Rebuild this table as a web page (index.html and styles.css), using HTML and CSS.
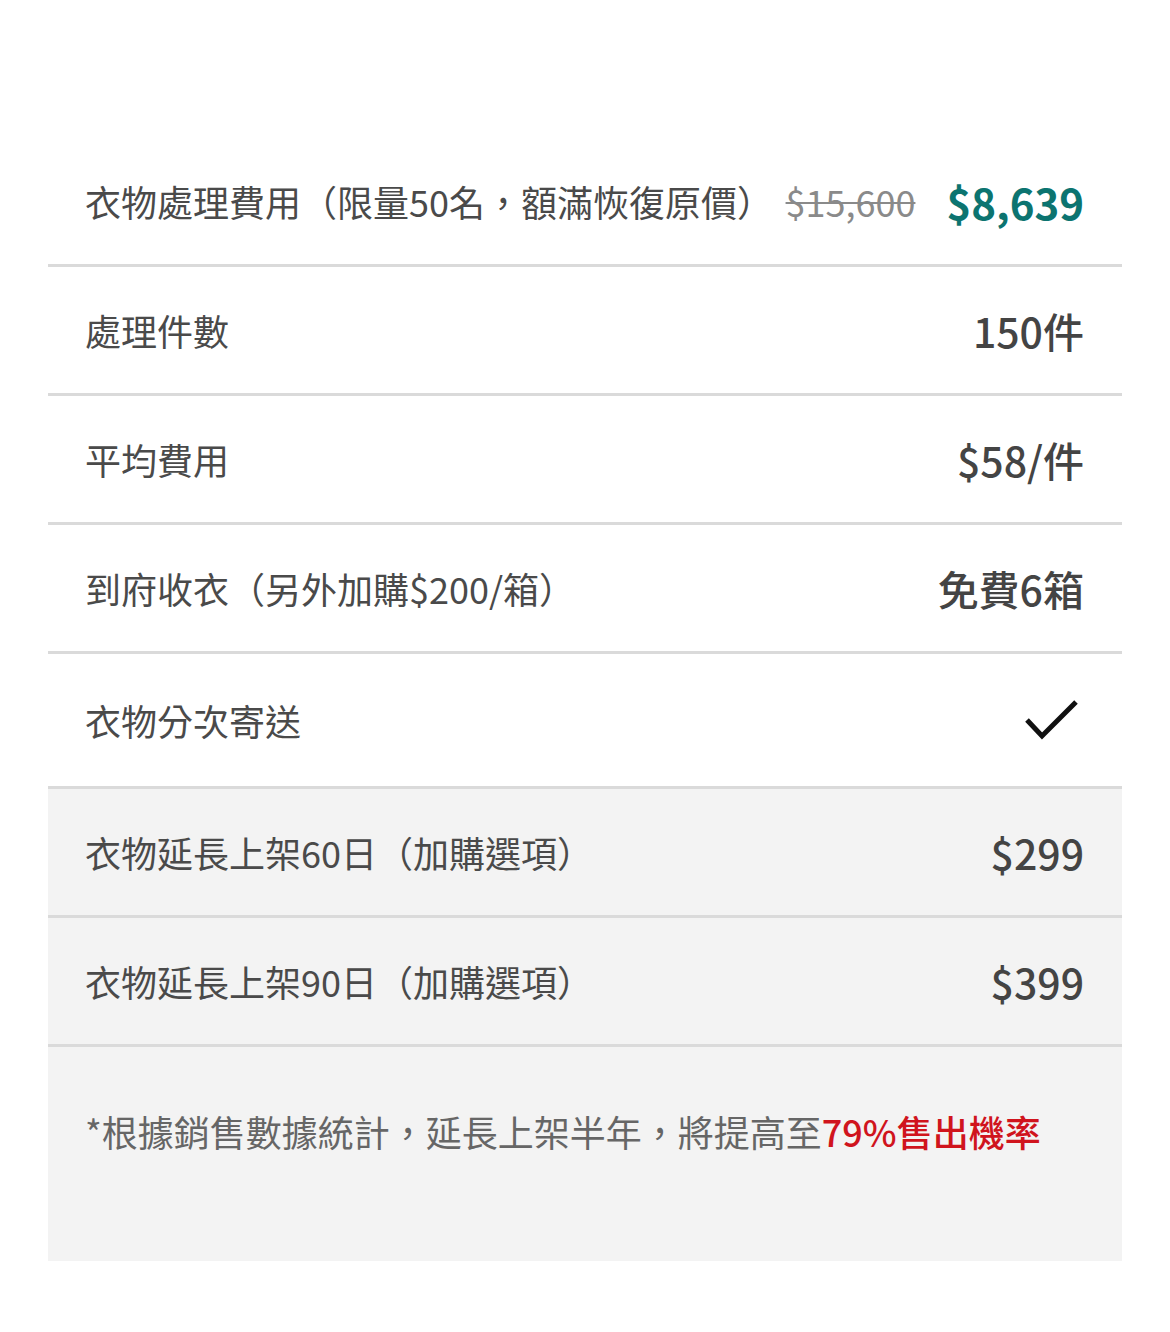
FILE: index.html
```html
<!DOCTYPE html>
<html lang="zh-Hant">
<head>
<meta charset="utf-8">
<link rel="stylesheet" href="styles.css">
</head>
<body>
<div class="table">
  <div class="row">
    <span class="label">衣物處理費用（限量50名，額滿恢復原價）</span>
    <span class="prices"><span class="old">$15,600</span><span class="new">$8,639</span></span>
  </div>
  <div class="row">
    <span class="label">處理件數</span>
    <span class="value">150件</span>
  </div>
  <div class="row">
    <span class="label">平均費用</span>
    <span class="value">$58/件</span>
  </div>
  <div class="row">
    <span class="label">到府收衣（另外加購$200/箱）</span>
    <span class="value">免費6箱</span>
  </div>
  <div class="row row-check">
    <span class="label">衣物分次寄送</span>
    <svg class="check" width="56" height="44" viewBox="0 0 56 44"><polyline points="3,22 18,38 52,4" fill="none" stroke="#111" stroke-width="5"/></svg>
  </div>
  <div class="row grey">
    <span class="label">衣物延長上架60日（加購選項）</span>
    <span class="value">$299</span>
  </div>
  <div class="row grey">
    <span class="label">衣物延長上架90日（加購選項）</span>
    <span class="value">$399</span>
  </div>
  <div class="note">*根據銷售數據統計，延長上架半年，將提高至<span class="hl">79%售出機率</span></div>
</div>
</body>
</html>
```
FILE: styles.css
```css
html, body {
  margin: 0;
  padding: 0;
  background: #fff;
}
body {
  font-family: "Noto Sans CJK TC", "Noto Sans", sans-serif;
}
.table {
  margin: 138px 48px 0;
  width: 1074px;
}
.row {
  height: 126px;
  border-bottom: 3px solid #dadada;
  display: flex;
  align-items: center;
  justify-content: space-between;
  padding: 0 38px 0 37px;
}
.row-check {
  height: 132px;
}
.grey {
  background: #f3f3f3;
}
.label {
  font-size: 36px;
  color: #4a4a4a;
}
.value {
  font-size: 41px;
  font-weight: 500;
  color: #444;
}
.prices {
  display: flex;
  align-items: center;
  gap: 31px;
}
.old {
  font-size: 36px;
  color: #8a8a8a;
  text-decoration: line-through;
  text-decoration-thickness: 2px;
}
.new {
  font-size: 42px;
  font-weight: 700;
  color: #0c7470;
}
.check {
  display: block;
  margin-right: 4px;
}
.note {
  background: #f3f3f3;
  height: 214px;
  box-sizing: border-box;
  padding: 58px 37px 0;
  font-size: 36px;
  color: #666;
}
.hl {
  color: #d0141d;
  font-weight: 500;
}
```
